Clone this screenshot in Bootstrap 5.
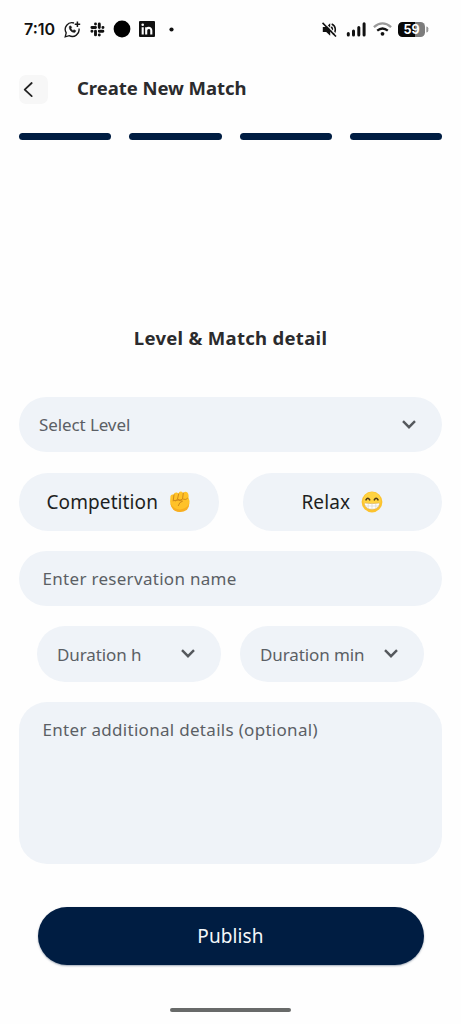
<!DOCTYPE html>
<html lang="en">
<head>
<meta charset="utf-8">
<meta name="viewport" content="width=device-width, initial-scale=1">
<title>Create New Match</title>
<link href="https://cdn.jsdelivr.net/npm/bootstrap@5.3.0/dist/css/bootstrap.min.css" rel="stylesheet">
<style>
  body { background: #fefefe; font-family: "Noto Sans", sans-serif; color: #1d1f22; overflow: hidden; }
  svg { display: block; flex: none; }
  .screen { width: 461px; height: 1024px; }
  .status { height: 58px; padding: 0 32px 0 24px; }
  .clock { font: 600 16px/20px Inter, sans-serif; letter-spacing: 0; width: 32px; color: #111; white-space: nowrap; }
  .topbar { height: 62px; padding: 0 19px; }
  .back { width: 29px; height: 29px; border-radius: 7px; background: #f7f7f7; border: 0; }
  .title { font-size: 18.5px; line-height: 26px; font-weight: 700; color: #2b2b2d; white-space: nowrap; letter-spacing: -.05px; }
  .topbar .title { margin-left: 29px; padding-bottom: 2px; }
  .steps { gap: 18px; padding: 0 19px; margin-top: 13px; }
  .step { height: 7px; background: #001d42; }
  .heading { margin-top: 185px; margin-bottom: 45.5px; letter-spacing: .3px; }
  .form-area { padding: 0 19px; }
  .field { background: #eff3f8; border: 0; height: 55.5px; border-radius: 28px; color: #5b5f65; font-size: 17px; letter-spacing: -.1px; white-space: nowrap; }
  .field > span { padding-top: 1px; }
  .picker { padding: 0 26px 0 20px; }
  .entry { letter-spacing: .3px; }
  .choice { height: 58px; border-radius: 29px; color: #1d1f22; font-size: 19px; letter-spacing: .1px; }
  .choice > span, .publish > span { padding-top: 2px; }
  .notes { height: 162px; margin-top: 20px; padding: 16px 23.5px; line-height: 24px; }
  .publish { height: 58px; margin: 43px 18.5px 0; border-radius: 29px; background: #001d42; color: #f4f7fa; font-size: 19px; letter-spacing: .1px; box-shadow: 0 1px 2px #001d4260; }
  .home { width: 121px; height: 4.5px; margin-top: 43px; background: #686a69; }
</style>
</head>
<body>
<main class="screen d-flex flex-column">
  <div class="status d-flex align-items-center">
    <span class="clock">7:10</span>
    <svg style="margin-left:8px" width="17" height="17" viewBox="0 0 17 17" fill="none" stroke="#161616" stroke-width="1.35">
      <path d="M10 2A6.7 6.7 0 0 0 2.2 11.8L1.2 15.8 5.2 14.7A6.8 6.8 0 0 0 15 7.5"/>
      <path d="M5.5 5.2C4.5 8 7.4 11.8 11 11.3L11.7 9.7 10 8.8 9 9.7C8 9.3 7.3 8.4 7 7.6L7.6 6.5 6.8 4.9Z" fill="#161616" stroke-width=".6"/>
      <path d="M13.4.6V6M10.7 3.3h5.5" stroke-width="1.5"/>
    </svg>
    <svg style="margin-left:9px" width="15" height="15" viewBox="0 0 15 15" stroke="#111" stroke-width="2.9" stroke-linecap="round">
      <path d="M5.5 1.9v.1M5.5 5.5H1.9M9.3 1.9v3.6M12.9 5.5h.1M9.3 9.3h3.6M9.3 12.9v.1M5.5 9.3v3.6M1.9 9.3h.1"/>
    </svg>
    <svg style="margin-left:8px" width="18" height="18" viewBox="0 0 18 18"><circle cx="9" cy="9" r="8.4" fill="#000"/></svg>
    <svg style="margin-left:8px" width="16" height="16" viewBox="0 0 16 16"><rect width="16" height="16" rx="1" fill="#111"/><circle cx="3.7" cy="3.7" r="1.3" fill="#fff"/><path d="M3.7 6.2v7.2M7.2 6.2v7.2M7.2 9.5c0-3.4 5.1-3.7 5.1 0v3.9" fill="none" stroke="#fff" stroke-width="2.1"/></svg>
    <svg style="margin-left:14px" width="5" height="5" viewBox="0 0 5 5"><circle cx="2.5" cy="2.5" r="2.1" fill="#111"/></svg>
    <div class="ms-auto d-flex align-items-center">
      <svg width="15" height="15" viewBox="0 0 15 15"><path d="M.8 5h3.4l4-3.7v12.4L4.2 10H.8z" fill="#111"/><path d="M9.4 4.8q2 2.3 0 5M9.7 2c4.6 1.9 4.6 8.1 1.3 10.5" fill="none" stroke="#111" stroke-width="1.5"/><path d="M1.7 0 15.2 13.5" stroke="#fefefe" stroke-width="1.2"/><path d="M.5.9 14 14.5" stroke="#111" stroke-width="1.6"/></svg>
      <svg style="margin-left:9px" width="21" height="15" viewBox="0 0 21 15" stroke="#111" stroke-width="3" stroke-linecap="round"><path d="M2.3 11.6v1.5M7.5 9v4.1M12.8 5.6v7.5M18.1 1.8v11.3"/></svg>
      <svg style="margin-left:6px" width="19" height="14" viewBox="0 0 19 14" fill="none" stroke-width="2.3"><path d="M.9 5.2Q9.5-2.4 18.1 5.2" stroke="#999"/><path d="M4.2 8.7q5.3-4.4 10.6 0" stroke="#111"/><circle cx="9.5" cy="11.8" r="1.9" fill="#111"/></svg>
      <svg style="margin-left:6px" width="31" height="15" viewBox="0 0 31 15"><path d="M4.5 0H17v15H4.5A4.5 4.5 0 0 1 0 10.5v-6A4.5 4.5 0 0 1 4.5 0" fill="#080808"/><path d="M17 0h5.5A4.5 4.5 0 0 1 27 4.5v6a4.5 4.5 0 0 1-4.5 4.5H17z" fill="#7c7c7c"/><path d="M28.3 4.5q2 0 2 1.7v2.6q0 1.7-2 1.7z" fill="#999"/><text x="13.5" y="12" text-anchor="middle" font-family="Inter,sans-serif" font-size="12.5" font-weight="700" fill="#fff">59</text></svg>
    </div>
  </div>

  <header class="topbar d-flex align-items-center">
    <button class="back p-0" aria-label="Back"><svg width="29" height="29" viewBox="0 0 29 29" fill="none" stroke="#222" stroke-width="1.8" stroke-linecap="round" stroke-linejoin="round"><path d="m12.7 8-7 6.6 7 6.5"/></svg></button>
    <h1 class="title mb-0">Create New Match</h1>
  </header>
  <div class="steps d-flex">
    <div class="step rounded-pill flex-fill"></div><div class="step rounded-pill flex-fill"></div><div class="step rounded-pill flex-fill"></div><div class="step rounded-pill flex-fill"></div>
  </div>

  <h2 class="title heading text-center">Level &amp; Match detail</h2>

  <div class="form-area">
    <div class="field picker d-flex align-items-center justify-content-between">
      <span>Select Level</span>
      <svg width="14" height="9" viewBox="0 0 14 9" fill="none" stroke="#55585d" stroke-width="2.4"><path d="m1 1.2 6 6 6-6"/></svg>
    </div>
    <div class="d-flex" style="gap:24px;margin-top:20.5px">
      <div class="field choice d-flex flex-fill w-50 align-items-center justify-content-center">
        <span>Competition</span>
        <svg style="margin-left:11px" width="22" height="22" viewBox="0 0 22 22"><path d="M1.1 10.5 1.5 5Q2.3 2.7 4.7 3.7 5 1.3 7.7 1.6 9.1 2 9.5 2.7 10-.1 12.8.7L14.2 2Q16.4-.1 18.4 1.5 20 3 19.5 6.6L20.5 10q.3 6.2-4.3 9.1-5.6 3-10.7.2Q1.2 16.2 1.1 10.5z" fill="#ffc229"/><path d="M1.5 12.5q4.5 7 10.7 5.8 6-.8 8-6-.1 7-5.5 8.3-11.5 2.1-13.2-8.1" fill="#f8ae20"/><path d="M5 3.7 4.3 9q2.2 2 4.1-.5L9.7 2.8M14.3 2l-.8 6.2q-2.5 1.9-4.8.1M18.7 7.2q-1.4 2.2-4.2 1.1M4 9.7q5.8-1.5 9.5.5-3.2.7-4.2 4.4" fill="none" stroke="#d08a1a" stroke-width="1" stroke-linecap="round"/></svg>
      </div>
      <div class="field choice d-flex flex-fill w-50 align-items-center justify-content-center">
        <span>Relax</span>
        <svg style="margin-left:11px" width="22" height="22" viewBox="0 0 22 22"><circle cx="11" cy="11" r="10.4" fill="#fcc22e"/><circle cx="11" cy="9.7" r="8.7" fill="#ffd341"/><path d="M5 8.9q1.8-3.3 3.7 0M13.3 8.9q1.8-3.3 3.7 0" fill="none" stroke="#503815" stroke-width="1.6" stroke-linecap="round"/><path d="M4.2 12.1q6.8 1 13.6 0 1.1.2.6 1.6-1.8 4.7-7.4 4.7t-7.4-4.7q-.4-1.5.6-1.6" fill="#fff" stroke="#d7ad5b" stroke-width=".6"/><path d="M4 15h14M7.2 12.7v5M11 12.7v5.5M14.8 12.7v5" stroke="#d5d1c4" stroke-width=".6"/></svg>
      </div>
    </div>
    <div class="field entry d-flex align-items-center" style="margin-top:20px;padding-left:23.5px"><span>Enter reservation name</span></div>
    <div class="d-flex" style="gap:19px;margin:20px 18px 0">
      <div class="field picker d-flex flex-fill w-50 align-items-center justify-content-between"><span>Duration h</span><svg width="14" height="9" viewBox="0 0 14 9" fill="none" stroke="#55585d" stroke-width="2.4"><path d="m1 1.2 6 6 6-6"/></svg></div>
      <div class="field picker d-flex flex-fill w-50 align-items-center justify-content-between"><span>Duration min</span><svg width="14" height="9" viewBox="0 0 14 9" fill="none" stroke="#55585d" stroke-width="2.4"><path d="m1 1.2 6 6 6-6"/></svg></div>
    </div>
    <div class="field entry notes"><span>Enter additional details (optional)</span></div>
    <div class="publish d-flex align-items-center justify-content-center"><span>Publish</span></div>
  </div>
  <div class="home rounded-pill mx-auto"></div>
</main>
<script src="https://cdn.jsdelivr.net/npm/bootstrap@5.3.0/dist/js/bootstrap.bundle.min.js"></script>
</body>
</html>
